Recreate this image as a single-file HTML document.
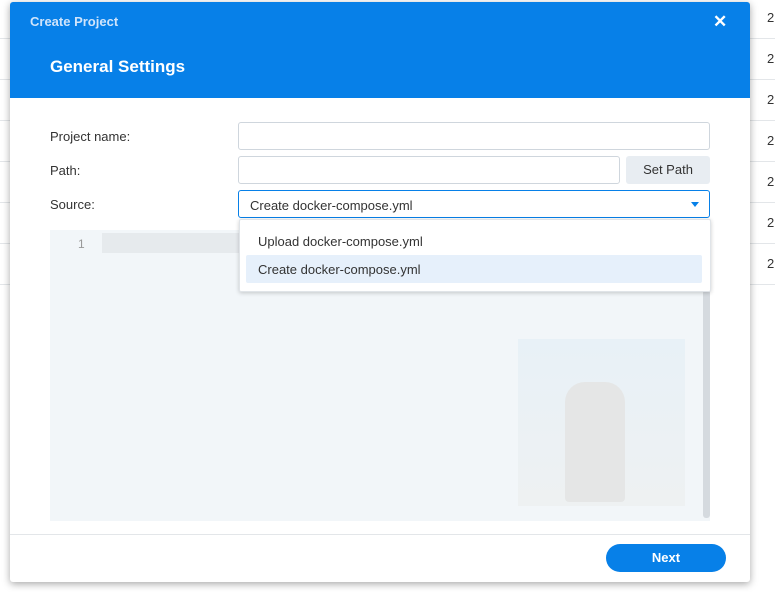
<!DOCTYPE html><html><head><style>
body{margin:0;width:775px;height:592px;background:#fff;font-family:"Liberation Sans",sans-serif;position:relative;overflow:hidden}
.row{position:absolute;left:0;width:775px;height:1px;background:#e3e6e9}
.n{position:absolute;left:767px;font-size:13px;color:#333}
.dlg{position:absolute;left:10px;top:2px;width:740px;height:580px;background:#fff;box-shadow:0 2px 8px rgba(0,0,0,.35);border-radius:3px;overflow:hidden}
.hd{position:absolute;left:0;top:0;width:740px;height:96px;background:#0780e8}
.t{position:absolute;font-weight:bold;color:#fff}
.lbl{position:absolute;left:40px;font-size:13px;color:#333}
.in{position:absolute;border:1px solid #cfd6dd;border-radius:3px;background:#fff;box-sizing:border-box}
</style></head><body>
<div class="row" style="top:38px"></div><div class="row" style="top:79px"></div><div class="row" style="top:120px"></div><div class="row" style="top:161px"></div><div class="row" style="top:202px"></div><div class="row" style="top:243px"></div><div class="row" style="top:284px"></div>
<div class="n" style="top:10px">2</div><div class="n" style="top:51px">2</div><div class="n" style="top:92px">2</div><div class="n" style="top:133px">2</div><div class="n" style="top:174px">2</div><div class="n" style="top:215px">2</div><div class="n" style="top:256px">2</div>
<div class="dlg">
<div class="hd"></div>
<div class="t" style="left:20px;top:12px;font-size:13px;color:#cfe4fb">Create Project</div>
<div class="t" style="left:703px;top:10px;font-size:17px">✕</div>
<div class="t" style="left:40px;top:55px;font-size:17px">General Settings</div>
<div class="lbl" style="top:127px">Project name:</div>
<div class="lbl" style="top:161px">Path:</div>
<div class="lbl" style="top:195px">Source:</div>
<div class="in" style="left:228px;top:120px;width:472px;height:28px"></div>
<div class="in" style="left:228px;top:154px;width:382px;height:28px"></div>
<div style="position:absolute;left:616px;top:154px;width:84px;height:28px;background:#e8edf2;border-radius:3px;font-size:13px;color:#333;text-align:center;line-height:28px">Set Path</div>
<div class="in" style="left:228px;top:188px;width:472px;height:28px;border-color:#0780e8;font-size:13px;color:#333;padding:7px 11px">Create docker-compose.yml</div>
<div style="position:absolute;left:681px;top:200px;width:0;height:0;border-left:4px solid transparent;border-right:4px solid transparent;border-top:5px solid #0780e8"></div>
<div style="position:absolute;left:40px;top:228px;width:660px;height:291px;background:#f2f6f9"></div>
<div style="position:absolute;left:92px;top:231px;width:600px;height:20px;background:#e6eaed"></div>
<div style="position:absolute;left:68px;top:235px;font-size:12px;color:#999">1</div>
<div style="position:absolute;left:693px;top:288px;width:7px;height:228px;background:#d5dadf;border-radius:3px"></div>
<div style="position:absolute;left:508px;top:337px;width:167px;height:167px;background:linear-gradient(#e8f1f7,#eef1f2)"></div>
<div style="position:absolute;left:555px;top:380px;width:60px;height:120px;background:#e5e6e6;border-radius:20px 20px 4px 4px"></div>
<div style="position:absolute;left:229px;top:217px;width:470px;height:71px;background:#fff;box-shadow:0 1px 4px rgba(0,0,0,.2);border:1px solid #e0e4e8;border-radius:2px"></div>
<div style="position:absolute;left:236px;top:253px;width:456px;height:28px;background:#e6f0fb;border-radius:2px"></div>
<div style="position:absolute;left:248px;top:232px;font-size:13px;color:#333">Upload docker-compose.yml</div>
<div style="position:absolute;left:248px;top:260px;font-size:13px;color:#333">Create docker-compose.yml</div>
<div style="position:absolute;left:0;top:532px;width:740px;height:1px;background:#e3e6e9"></div>
<div style="position:absolute;left:596px;top:542px;width:120px;height:28px;background:#0780e8;border-radius:14px;color:#fff;font-weight:bold;font-size:13px;text-align:center;line-height:28px">Next</div>
</div>
</body></html>
